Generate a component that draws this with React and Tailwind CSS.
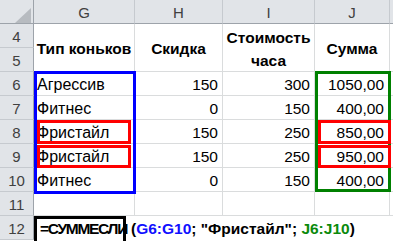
import React from 'react'

const rows = [
  { n: 6, g: 'Агрессив', h: '150', i: '300', j: '1050,00' },
  { n: 7, g: 'Фитнес', h: '0', i: '150', j: '400,00' },
  { n: 8, g: 'Фристайл', h: '150', i: '250', j: '850,00' },
  { n: 9, g: 'Фристайл', h: '150', i: '250', j: '950,00' },
  { n: 10, g: 'Фитнес', h: '0', i: '150', j: '400,00' },
]

const hdr = 'bg-[#e1e4e8] text-[#404040] text-[15px] leading-[17px]'
const rowHdr = `${hdr} border-r border-b border-r-[#9da3aa] border-b-[#c6cacf] flex items-end justify-center pb-[2px]`
const colHdr = `${hdr} border-r border-b border-r-[#c6cacf] border-b-[#9da3aa] flex items-end justify-center pb-[2px]`
const cell = 'border-r border-b border-[#dadcdd] flex items-end leading-[17px] text-black pb-[2px]'
const head = 'row-span-2 border-r border-b border-[#dadcdd] flex items-center justify-center text-center font-bold text-[15.5px] text-black pt-[2px]'

const App = () => {
  return (
    <div className="relative w-[393px] h-[241px] overflow-hidden bg-white font-['Liberation_Sans',Arial,sans-serif]">
      <div className="grid grid-cols-[34px_101px_88px_92px_75px_1fr] auto-rows-[24px]">
        {/* column headers */}
        <div className={`${hdr} border-r border-b border-[#9da3aa] flex items-end justify-end pr-[2px]`}>
          <svg width="16" height="15" viewBox="0 0 16 15">
            <polygon points="16,0 16,15 0,15" fill="#b7bbc0" />
          </svg>
        </div>
        {['G', 'H', 'I', 'J'].map((l) => (
          <div key={l} className={colHdr}>{l}</div>
        ))}
        <div className={`${hdr} border-b border-[#9da3aa]`} />

        {/* rows 4-5, merged headings */}
        <div className={rowHdr}>4</div>
        <div className={head}>Тип коньков</div>
        <div className={head}>Скидка</div>
        <div className={`${head} leading-[23px]`}>Стоимость<br />часа</div>
        <div className={head}>Сумма</div>
        <div className="row-span-2 border-b border-[#dadcdd]" />
        <div className={rowHdr}>5</div>

        {rows.map((r) => (
          <React.Fragment key={r.n}>
            <div className={rowHdr}>{r.n}</div>
            <div className={`${cell} text-[16px] pl-[3px]`}>{r.g}</div>
            <div className={`${cell} text-[15.5px] justify-end pr-[4px]`}>{r.h}</div>
            <div className={`${cell} text-[15.5px] justify-end pr-[4px]`}>{r.i}</div>
            <div className={`${cell} text-[15.5px] justify-end pr-[5px]`}>{r.j}</div>
            <div className="border-b border-[#dadcdd]" />
          </React.Fragment>
        ))}

        <div className={rowHdr}>11</div>
        <div className={cell} />
        <div className={cell} />
        <div className={cell} />
        <div className={cell} />
        <div className="border-b border-[#dadcdd]" />

        <div className={rowHdr}>12</div>
        <div className="col-span-5 flex items-end pl-[6px] pb-[3px] text-[15.5px] leading-[17px] font-bold text-black whitespace-nowrap">
          <span className="tracking-[-1.3px]">=СУММЕСЛИ</span>
          <span className="pl-[4px]">(</span>
          <span className="text-[#1010ff]">G6:G10</span>
          <span className="whitespace-pre">; "Фристайл"; </span>
          <span className="text-[#0b8a0b]">J6:J10</span>
          <span>)</span>
        </div>
      </div>

      {/* range highlights */}
      <div className="absolute left-[34px] top-[71px] w-[102px] h-[123px] border-[3px] border-[#0000ff]" />
      <div className="absolute left-[315px] top-[71px] w-[76px] h-[121px] border-[3px] border-[#008000]" />
      <div className="absolute left-[37px] top-[120px] w-[94px] h-[24px] border-[3px] border-[#ff0000]" />
      <div className="absolute left-[37px] top-[145px] w-[94px] h-[23px] border-[3px] border-[#ff0000]" />
      <div className="absolute left-[318px] top-[120px] w-[73px] h-[24px] border-[3px] border-[#ff0000]" />
      <div className="absolute left-[318px] top-[145px] w-[73px] h-[23px] border-[3px] border-[#ff0000]" />
      <div className="absolute left-[34px] top-[216px] w-[92px] h-[30px] border-[3px] border-black" />
    </div>
  )
}

export default App
